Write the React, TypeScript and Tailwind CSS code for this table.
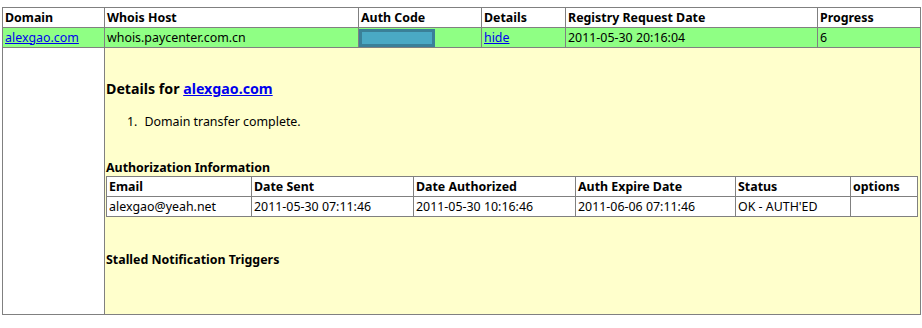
const font = { fontFamily: '"Noto Sans", "Open Sans", sans-serif' };

const outerCols = [102, 254, 123, 84, 252, 103];
const innerCols = [145, 162, 162, 160, 115, 67];

const th = 'border border-[#808080] px-[2px] text-left font-bold h-[20px] leading-[18px] align-middle';
const td = 'border border-[#808080] px-[2px] h-[20px] leading-[18px] align-middle';

export default function App() {
  return (
    <div className="w-[922px] h-[328px] bg-white text-black text-[12.4px] pt-[7px] pl-[2px]" style={font}>
      <table className="border-collapse table-fixed w-[918px]">
        <colgroup>
          {outerCols.map((w, i) => (
            <col key={i} style={{ width: w }} />
          ))}
        </colgroup>
        <thead>
          <tr className="bg-white">
            <th className={th}>Domain</th>
            <th className={th}>Whois Host</th>
            <th className={th}>Auth Code</th>
            <th className={th}>Details</th>
            <th className={th}>Registry Request Date</th>
            <th className={th}>Progress</th>
          </tr>
        </thead>
        <tbody>
          <tr className="bg-[#8fff84]">
            <td className={td}>
              <a href="#" className="text-[#0000ee] underline">alexgao.com</a>
            </td>
            <td className={td}>whois.paycenter.com.cn</td>
            <td className="border border-[#808080] p-0 h-[20px] align-middle">
              <div className="w-[76px] h-[18px] bg-[#4aa9c4] border-[3px] border-[#3a8098]" />
            </td>
            <td className={td}>
              <a href="#" className="text-[#0000ee] underline">hide</a>
            </td>
            <td className={td}>2011-05-30 20:16:04</td>
            <td className={td}>6</td>
          </tr>
          <tr>
            <td className="border border-[#808080] bg-white" />
            <td colSpan={5} className="border border-[#808080] bg-[#ffffcc] p-0 align-top h-[267px]">
              <div className="pl-[1px] pr-[1px]">
                <h3 className="mt-[31px] text-[14.2px] font-bold leading-[20px]">
                  Details for{' '}
                  <a href="#" className="text-[#0000ee] underline">alexgao.com</a>
                </h3>
                <ol className="mt-[14px] pl-[21px] leading-[18px]">
                  <li className="flex gap-[7px]">
                    <span>1.</span>
                    <span>Domain transfer complete.</span>
                  </li>
                </ol>
                <div className="mt-[28px] font-bold leading-[17px]">Authorization Information</div>
                <table className="border-collapse table-fixed w-[812px] bg-white">
                  <colgroup>
                    {innerCols.map((w, i) => (
                      <col key={i} style={{ width: w }} />
                    ))}
                  </colgroup>
                  <thead>
                    <tr>
                      <th className={th}>Email</th>
                      <th className={th}>Date Sent</th>
                      <th className={th}>Date Authorized</th>
                      <th className={th}>Auth Expire Date</th>
                      <th className={th}>Status</th>
                      <th className={th}>options</th>
                    </tr>
                  </thead>
                  <tbody>
                    <tr>
                      <td className={td}>alexgao@yeah.net</td>
                      <td className={td}>2011-05-30 07:11:46</td>
                      <td className={td}>2011-05-30 10:16:46</td>
                      <td className={td}>2011-06-06 07:11:46</td>
                      <td className={td}>OK - AUTH'ED</td>
                      <td className={td}></td>
                    </tr>
                  </tbody>
                </table>
                <div className="mt-[34px] font-bold leading-[18px]">Stalled Notification Triggers</div>
              </div>
            </td>
          </tr>
        </tbody>
      </table>
    </div>
  );
}
